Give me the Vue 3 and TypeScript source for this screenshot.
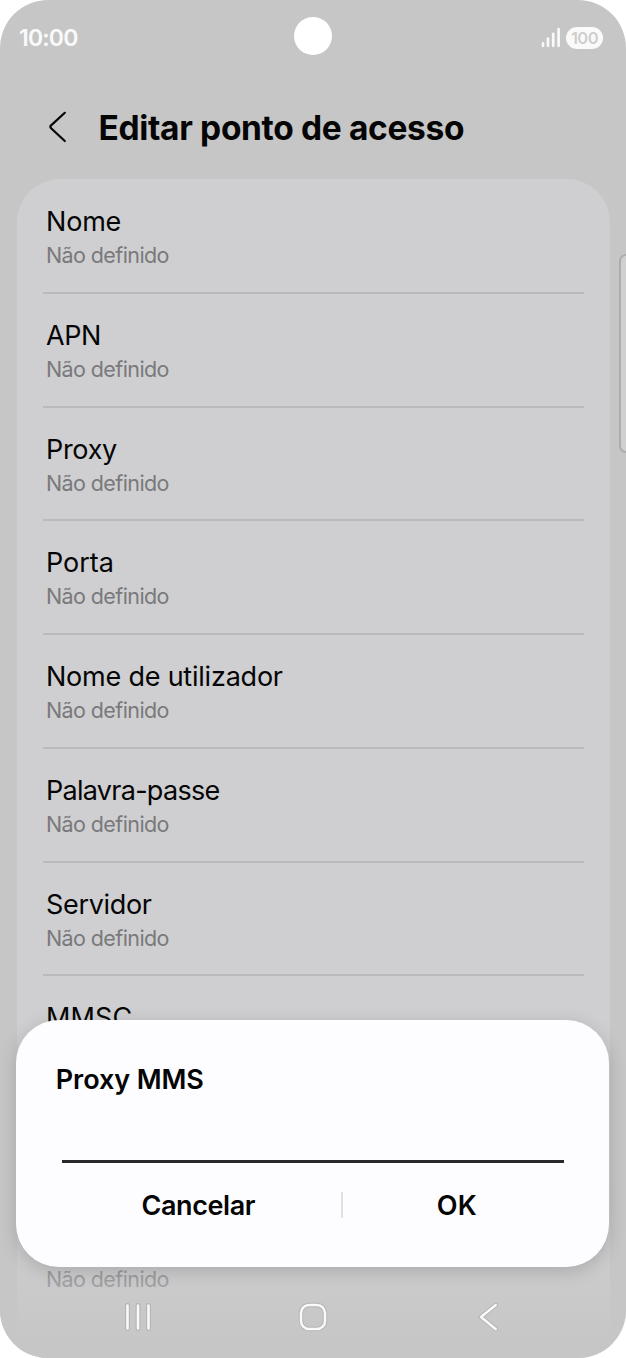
<script setup lang="ts">
interface Setting {
  label: string
  tracking: number
}

const settings: Setting[] = [
  { label: 'Nome', tracking: -0.2 },
  { label: 'APN', tracking: -0.4 },
  { label: 'Proxy', tracking: -0.3 },
  { label: 'Porta', tracking: -0.05 },
  { label: 'Nome de utilizador', tracking: -0.22 },
  { label: 'Palavra-passe', tracking: -0.72 },
  { label: 'Servidor', tracking: -0.32 },
  { label: 'MMSC', tracking: 0.1 },
  { label: 'Proxy MMS', tracking: 0 },
  { label: 'Porta MMS', tracking: 0 },
]
</script>

<template>
  <div class="phone">
    <header class="status">
      <span class="clock">10:00</span>
      <span class="camera"></span>
      <div class="indicators">
        <svg class="signal" width="20" height="22" viewBox="0 0 20 22">
          <path d="M2 16.4V18.8M7 11.7V18.8M12.2 6.8V18.8M17.6 2.2V18.8" fill="none" stroke="#f9f9f9" stroke-width="2.7" stroke-linecap="round" />
        </svg>
        <span class="battery">100</span>
      </div>
    </header>

    <div class="heading">
      <svg class="back" width="20" height="34" viewBox="0 0 20 34">
        <path d="M16.8 2.8L3.1 15.4Q1.6 16.8 3.1 18.2L16.8 31" fill="none" stroke="#050505" stroke-width="2.2" stroke-linecap="round" stroke-linejoin="round" />
      </svg>
      <h1>Editar ponto de acesso</h1>
    </div>

    <main class="card">
      <section v-for="s in settings" :key="s.label" class="row">
        <span class="label" :style="{ letterSpacing: s.tracking + 'px' }">{{ s.label }}</span>
        <span class="value">Não definido</span>
      </section>
    </main>

    <div class="fade"></div>
    <div class="edge-handle"></div>

    <div class="dialog">
      <h2>Proxy MMS</h2>
      <div class="field"></div>
      <div class="actions">
        <button class="cancel">Cancelar</button>
        <span class="separator"></span>
        <button class="ok">OK</button>
      </div>
    </div>

    <nav class="nav">
      <svg width="32" height="32" viewBox="0 0 32 32">
        <g fill="none" stroke-linecap="round">
          <path d="M5.5 4.5V27.5M16 4.5V27.5M26.5 4.5V27.5" stroke="#b3b3b3" stroke-width="4.8" />
          <path d="M5.5 4.5V27.5M16 4.5V27.5M26.5 4.5V27.5" stroke="#fafafa" stroke-width="2.6" />
        </g>
      </svg>
      <svg width="32" height="32" viewBox="0 0 32 32">
        <rect x="4" y="4" width="24" height="24" rx="8" fill="none" stroke="#b3b3b3" stroke-width="4.4" />
        <rect x="4" y="4" width="24" height="24" rx="8" fill="none" stroke="#fafafa" stroke-width="2.5" />
      </svg>
      <svg width="32" height="32" viewBox="0 0 32 32">
        <g fill="none" stroke-linecap="round" stroke-linejoin="round">
          <path d="M23.8 4L9 16L23.8 28.2" stroke="#b3b3b3" stroke-width="4.3" />
          <path d="M23.8 4L9 16L23.8 28.2" stroke="#fafafa" stroke-width="2.4" />
        </g>
      </svg>
    </nav>
  </div>
</template>

<style>
body {
  margin: 0;
  background: #fff;
}
</style>

<style scoped>
.phone {
  position: relative;
  width: 626px;
  height: 1358px;
  box-sizing: border-box;
  overflow: hidden;
  border-radius: 48px;
  background: #c6c6c6;
  font-family: Inter, "Noto Sans", sans-serif;
  color: #050505;
}
.status {
  display: grid;
  grid-template-columns: 1fr 38px 1fr;
  align-items: center;
  height: 75px;
  padding: 0 23px 0 19px;
  box-sizing: border-box;
}
.clock {
  color: #fafafa;
  font-size: 23px;
  font-weight: 600;
  letter-spacing: -0.8px;
}
.camera {
  width: 38px;
  height: 38px;
  margin: -3px 0 0 1.7px;
  border-radius: 50%;
  background: #fff;
}
.indicators {
  display: flex;
  justify-content: flex-end;
  align-items: center;
  gap: 5px;
}
.battery {
  width: 37px;
  height: 22px;
  border-radius: 11px;
  background: #fafafa;
  color: #cfcfcf;
  font-size: 16.5px;
  font-weight: 600;
  letter-spacing: -0.5px;
  line-height: 22px;
  text-align: center;
}
.heading {
  display: flex;
  align-items: center;
  gap: 30.5px;
  height: 104px;
  padding-left: 48px;
}
.back {
  display: block;
}
h1 {
  margin: 2px 0 0;
  font-size: 33.5px;
  font-weight: 700;
  letter-spacing: -0.34px;
  line-height: 40px;
  white-space: nowrap;
}
.card {
  width: 593px;
  height: 1200px;
  margin-left: 16.5px;
  overflow: hidden;
  border-radius: 43px 43px 0 0;
  background: #cfcfd1;
}
.row {
  position: relative;
  display: flex;
  flex-direction: column;
  align-items: flex-start;
  gap: 2px;
  height: 113.75px;
  margin: 0 25.7px 0 26px;
  padding: 26px 4px 0 3.5px;
  box-sizing: border-box;
}
.row::after {
  content: "";
  position: absolute;
  left: 0;
  right: 0;
  bottom: -1.2px;
  height: 2px;
  background: #bababc;
}
.row:last-child::after {
  display: none;
}
.label {
  font-size: 27px;
  line-height: 34px;
}
.value {
  color: #79797b;
  font-size: 21.5px;
  letter-spacing: -0.6px;
  line-height: 28px;
}
.fade {
  position: absolute;
  left: 0;
  right: 0;
  top: 1180px;
  bottom: 0;
  background: linear-gradient(rgba(198, 198, 198, 0), rgba(198, 198, 199, 0.4) 50%, #c6c6c7 92%);
}
.edge-handle {
  position: absolute;
  left: 618.5px;
  top: 254px;
  width: 14px;
  height: 199px;
  box-sizing: border-box;
  border: 2px solid #adadae;
  border-radius: 8px;
  background: #d0d0d1;
}
.dialog {
  position: absolute;
  left: 16.3px;
  top: 1019.7px;
  width: 593px;
  height: 247px;
  box-sizing: border-box;
  padding: 43px 45.5px 0 45.5px;
  border-radius: 43px;
  background: #fdfdff;
  box-shadow: 0 4px 18px rgba(0, 0, 0, 0.17);
}
h2 {
  margin: 0 0 0 -6px;
  font-size: 27px;
  font-weight: 600;
  letter-spacing: -0.1px;
  line-height: 34px;
}
.field {
  height: 63.3px;
  border-bottom: 3.5px solid #29292b;
}
.actions {
  display: grid;
  grid-template-columns: 279px 2px 1fr;
  align-items: center;
  height: 84px;
}
.separator {
  height: 26px;
  background: #e2e2e4;
}
button {
  padding: 0;
  border: 0;
  background: none;
  color: #050505;
  font: 600 27px/34px Inter, "Noto Sans", sans-serif;
}
.cancel {
  padding: 2px 6px 0 0;
  letter-spacing: -0.4px;
}
.ok {
  padding: 2px 0 0 7px;
  letter-spacing: 0.3px;
}
.nav {
  position: absolute;
  left: 0;
  right: 0;
  top: 1301px;
  display: flex;
  justify-content: center;
  gap: 143.3px;
}
</style>
